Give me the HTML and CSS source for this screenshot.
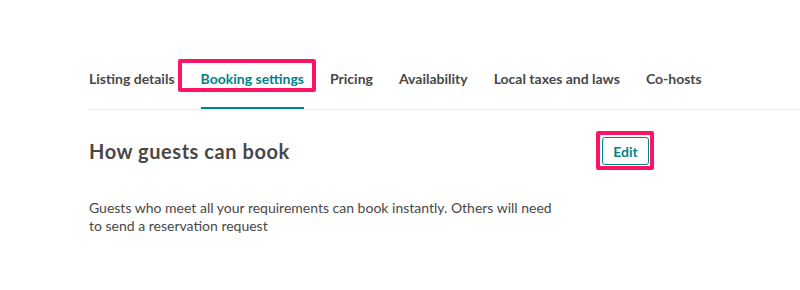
FILE: index.html
```html
<!DOCTYPE html>
<html lang="en">

<head>
    <meta charset="UTF-8">
    <meta name="viewport" content="width=device-width, initial-scale=1.0">
    <title>Booking settings</title>
    <link rel="stylesheet" href="styles.css">
</head>

<body>

    <!-- Tabs -->
    <nav class="tabs">
        <a class="tab" href="#">Listing details</a>
        <a class="tab active highlight" href="#">Booking settings</a>
        <a class="tab" href="#">Pricing</a>
        <a class="tab" href="#">Availability</a>
        <a class="tab" href="#">Local taxes and laws</a>
        <a class="tab" href="#">Co-hosts</a>
    </nav>

    <!-- How guests can book -->
    <section class="section">
        <div class="section-head">
            <h2>How guests can book</h2>
            <button class="edit-btn">Edit</button>
        </div>
        <p class="section-text">Guests who meet all your requirements can book instantly. Others will need to send a reservation request</p>
    </section>

</body>

</html>
```

FILE: styles.css
```css
* {
    box-sizing: border-box;
    font-family: 'Lato', 'Noto Sans', sans-serif;
}

body {
    margin: 0;
    padding: 0;
    background: #fff;
    color: #484848;
}

.tabs {
    display: flex;
    gap: 26px;
    margin: 68px 0 0 89px;
    border-bottom: 1px solid #ebebeb;
}

.tab {
    position: relative;
    font-size: 14px;
    line-height: 20px;
    font-weight: 700;
    color: #484848;
    text-decoration: none;
    padding: 1px 0 18px;
    border-bottom: 2px solid transparent;
}

.tab.active {
    color: #008489;
    border-bottom-color: #008489;
}

/* pink annotation box */
.tab.highlight::after {
    content: "";
    position: absolute;
    left: -23px;
    right: -12px;
    top: -9px;
    bottom: 15px;
    border: 4px solid #ff1464;
    border-radius: 2px;
}

.section {
    width: 560px;
    margin: 27px 0 0 89px;
}

.section-head {
    display: flex;
    justify-content: space-between;
    align-items: center;
}

.section-head h2 {
    margin: 0;
    font-size: 20px;
    line-height: 28px;
    font-weight: 700;
    letter-spacing: 0.55px;
    color: #484848;
}

.edit-btn {
    position: relative;
    width: 47px;
    height: 28px;
    padding: 0;
    background: #fff;
    border: 1px solid #008489;
    border-radius: 3px;
    color: #008489;
    font-size: 14px;
    font-weight: 700;
    cursor: pointer;
}

.edit-btn::after {
    content: "";
    position: absolute;
    left: -7px;
    right: -6px;
    top: -7px;
    bottom: -6px;
    border: 4px solid #ff1464;
    border-radius: 2px;
}

.section-text {
    max-width: 470px;
    margin: 34px 0 0;
    font-size: 14px;
    line-height: 18px;
    color: #484848;
}
```
